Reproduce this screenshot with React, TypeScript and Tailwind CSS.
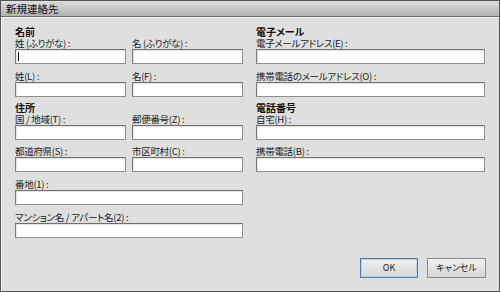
import React from "react";

const font = "font-['Noto_Sans_CJK_JP','Noto_Sans',sans-serif] [font-feature-settings:'palt']";

function Label({ children, mt = "mt-[6px]" }: { children: React.ReactNode; mt?: string }) {
  return (
    <div className={`${mt} h-[12px] text-[9.5px] leading-[12px] tracking-[-0.3px] text-[#222] whitespace-nowrap`}>
      {children}
    </div>
  );
}

function Heading({ children, mt }: { children: React.ReactNode; mt: string }) {
  return (
    <div className={`${mt} h-[11px] text-[10px] leading-[11px] font-bold text-[#111] whitespace-nowrap`}>
      {children}
    </div>
  );
}

function Input({ caret = false }: { caret?: boolean }) {
  return (
    <div className="relative h-[15px] w-full bg-white border border-[#8e8e8e] border-t-[#6f6f6f] border-l-[#7a7a7a] shadow-[inset_1px_1px_0_#e4e4e4]">
      {caret && <div className="absolute left-[2px] top-[2px] h-[9px] w-px bg-black" />}
    </div>
  );
}

function Field({ label, mt, caret }: { label: string; mt?: string; caret?: boolean }) {
  return (
    <div className="flex flex-col">
      <Label mt={mt}>{label}</Label>
      <Input caret={caret} />
    </div>
  );
}

export default function App() {
  return (
    <div className={`${font} w-[500px] h-[292px] flex flex-col bg-[#dfdfdf] border border-[#555] overflow-hidden`}>
      <div className="h-[16px] shrink-0 bg-gradient-to-b from-[#dedede] to-[#b2b2b2] border-b border-[#6a6a6a] flex items-center pl-[5px]">
        <span className="text-[10.5px] leading-[12px] text-[#111]">新規連絡先</span>
      </div>
      <div className="flex-1 flex flex-col border-l border-t border-[#f2f2f2] px-[13px] pb-[13px]">
        <div className="flex gap-[13px]">
          {/* left */}
          <div className="w-[228px] flex flex-col">
            <Heading mt="mt-[8px]">名前</Heading>
            <div className="grid grid-cols-2 gap-x-[6px]">
              <Field label="姓 (ふりがな) :" mt="mt-0" caret />
              <Field label="名 (ふりがな) :" mt="mt-0" />
              <Field label="姓(L) :" />
              <Field label="名(F) :" />
            </div>
            <Heading mt="mt-[5px]">住所</Heading>
            <div className="grid grid-cols-2 gap-x-[6px]">
              <Field label="国 / 地域(T) :" mt="mt-0" />
              <Field label="郵便番号(Z) :" mt="mt-0" />
              <Field label="都道府県(S) :" mt="mt-[5px]" />
              <Field label="市区町村(C) :" mt="mt-[5px]" />
            </div>
            <Field label="番地(1) :" />
            <Field label="マンション名 / アパート名(2) :" />
          </div>
          {/* right */}
          <div className="w-[229px] flex flex-col">
            <Heading mt="mt-[8px]">電子メール</Heading>
            <Field label="電子メールアドレス(E) :" mt="mt-0" />
            <Field label="携帯電話のメールアドレス(O) :" />
            <Heading mt="mt-[5px]">電話番号</Heading>
            <Field label="自宅(H) :" mt="mt-0" />
            <Field label="携帯電話(B) :" mt="mt-[5px]" />
          </div>
        </div>
        <div className="mt-auto flex justify-end gap-[9px]">
          <button className="w-[58px] h-[20px] border border-[#4f76ad] bg-gradient-to-b from-[#f0f0f0] to-[#d6d6d6] text-[9px] leading-[18px] text-[#222] shadow-[inset_0_0_0_1px_#bcd0ea]">
            OK
          </button>
          <button className="w-[59px] h-[20px] border border-[#8a8a8a] bg-gradient-to-b from-[#f0f0f0] to-[#d6d6d6] text-[9px] leading-[18px] text-[#222]">
            キャンセル
          </button>
        </div>
      </div>
    </div>
  );
}
